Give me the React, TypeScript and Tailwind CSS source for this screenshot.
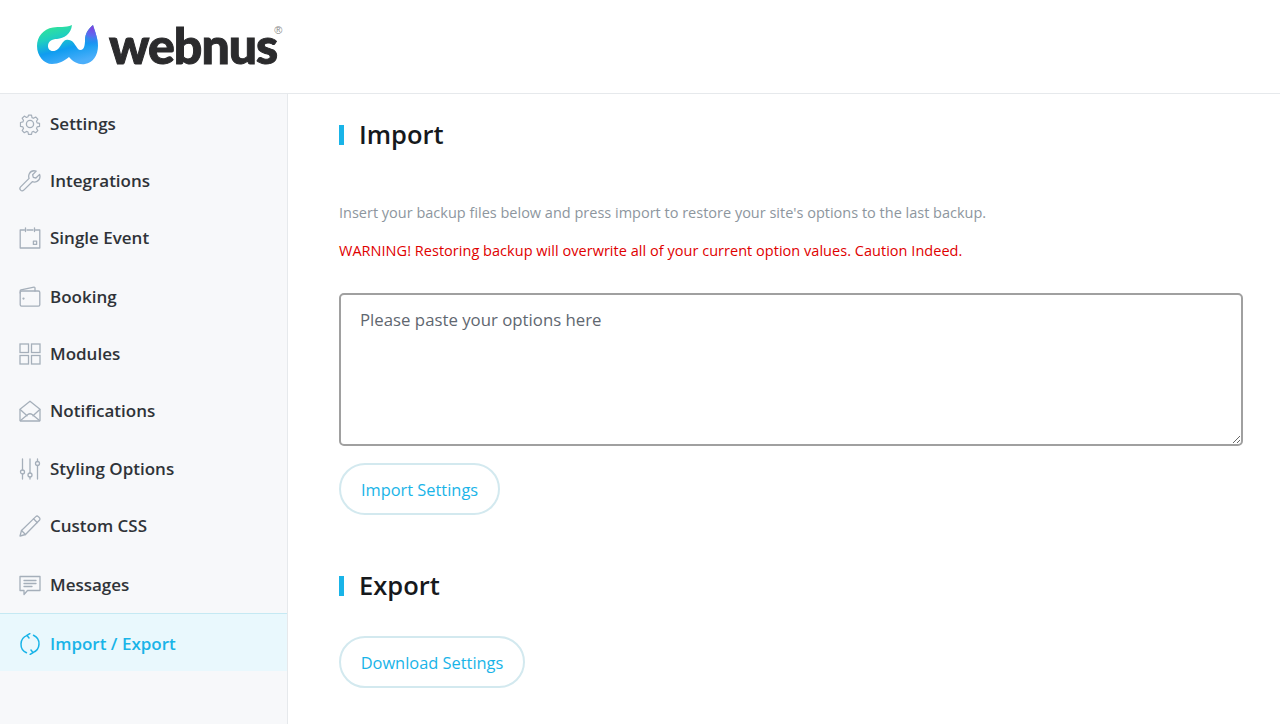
const navItems = [
  { label: "Settings", h: "h-[57.5px]", icon: "gear" },
  { label: "Integrations", h: "h-[57px]", icon: "wrench" },
  { label: "Single Event", h: "h-[57px]", icon: "calendar" },
  { label: "Booking", h: "h-[59.5px] pt-px", icon: "wallet" },
  { label: "Modules", h: "h-[56px]", icon: "grid" },
  { label: "Notifications", h: "h-[57px]", icon: "mail" },
  { label: "Styling Options", h: "h-[59px]", icon: "sliders" },
  { label: "Custom CSS", h: "h-[58px] pb-[2px]", icon: "pencil" },
  { label: "Messages", h: "h-[57px]", icon: "message" },
];

function NavIcon({ name }: { name: string }) {
  const common = {
    width: 22,
    height: 22,
    viewBox: "0 0 22 22",
    fill: "none",
    stroke: "currentColor",
    strokeWidth: 1.3,
    strokeLinejoin: "round" as const,
    strokeLinecap: "round" as const,
  };
  if (name === "gear") {
    return (
      <svg {...common}>
        <circle cx="11" cy="11" r="3.6" />
        <path d="M9.3 1.2h3.4l.5 2.7 1.7.8 2.4-1.5 2.4 2.4-1.5 2.4.7 1.7 2.7.6v3.4l-2.7.5-.7 1.7 1.5 2.4-2.4 2.4-2.4-1.5-1.7.7-.5 2.7H9.3l-.5-2.7-1.7-.7-2.4 1.5-2.4-2.4 1.5-2.4-.7-1.7-2.7-.5V9.3l2.7-.6.7-1.7-1.5-2.4 2.4-2.4 2.4 1.5 1.7-.8z" transform="translate(1.1 1.1) scale(.9)" />
      </svg>
    );
  }
  if (name === "wrench") {
    return (
      <svg {...common}>
        <path d="M20.6 4.4l-3.7 3.6-2.6-.7-.7-2.6 3.6-3.6c-2.6-.8-5.6.2-6.9 2.6-.8 1.6-.8 3.2-.2 4.7L1.6 16.9c-.9 1-.9 2.3 0 3.2.9.9 2.2.9 3.2 0l8.5-8.4c1.5.6 3.2.5 4.7-.3 2.4-1.3 3.4-4.3 2.6-7z" />
      </svg>
    );
  }
  if (name === "calendar") {
    return (
      <svg {...common}>
        <path d="M5.500 3H1.200v18h19.600V3h-4.300M8 3h6" />
        <path d="M6.500 .8v3.700M15.500 .8v3.700" />
        <rect x="14.400" y="14.200" width="3.200" height="3.200" />
      </svg>
    );
  }
  if (name === "wallet") {
    return (
      <svg {...common}>
        <path d="M1.200 7V4.800c0-.5.3-.9.8-1L15 1.200c.6-.1 1 .3 1 .9V5" />
        <rect x="1.200" y="5" width="19.600" height="15.200" rx="1.400" />
        <circle cx="4.500" cy="12.600" r=".5" />
      </svg>
    );
  }
  if (name === "grid") {
    return (
      <svg {...common} strokeLinejoin="miter">
        <rect x="1" y="1" width="8.500" height="8.500" />
        <rect x="12.500" y="1" width="8.500" height="8.500" />
        <rect x="1" y="12.500" width="8.500" height="8.500" />
        <rect x="12.500" y="12.500" width="8.500" height="8.500" />
      </svg>
    );
  }
  if (name === "mail") {
    return (
      <svg {...common}>
        <path d="M1 9.200L11 1.200l10 8v11.300c0 .3-.2.5-.5.5H1.500c-.3 0-.5-.2-.5-.5z" />
        <path d="M1.500 20.600L8.800 14.600c1.300-1 3.100-1 4.400 0l7.300 6" />
        <path d="M1.200 9.600l6.800 6.200M20.800 9.600L14 15.800" />
      </svg>
    );
  }
  if (name === "sliders") {
    return (
      <svg {...common}>
        <path d="M3.500 1v11M3.500 16v5M11 1v14M11 19v2M18.500 1v2.500M18.500 7.500V21" />
        <circle cx="3.500" cy="14" r="2" />
        <circle cx="11" cy="17" r="2" />
        <circle cx="18.500" cy="5.500" r="2" />
      </svg>
    );
  }
  if (name === "pencil") {
    return (
      <svg {...common}>
        <path d="M6.500 19.500L1 21l1.500-5.500L16.800 1.600c.7-.7 1.800-.7 2.500 0l1.100 1.100c.7.7.7 1.800 0 2.500z" />
        <path d="M14.500 3.800l3.700 3.700M2.500 15.500l4 4" />
      </svg>
    );
  }
  if (name === "message") {
    return (
      <svg {...common}>
        <path d="M1 2.500h20v14H8.500L5 20.500v-4H1z" />
        <path d="M5 6.500h12M5 9.500h12M5 12.500h8" />
      </svg>
    );
  }
  return (
    <svg {...common} strokeWidth={1.5}>
      <path d="M7.500 19.800A9.400 9.400 0 0 1 8.200 2.400M14.500 2.200a9.400 9.400 0 0 1-.7 17.400" />
      <path d="M10.800 .6L8 2.400l2 2.600M11.200 21.400l2.800-1.800-2-2.600" />
    </svg>
  );
}

function Logo() {
  const mark =
    "M35 0C28 3 22 1.500 16 2.500C6 4 0 12 0 21C0 31 7 39 15 39C22 39 27 36 32 32C36 37 42 40 48 39C56 38 61 30 61 21C61 13 58 7 56 0C51 4 48 9 48 15C48 19 47.500 25 43.500 25C39 25 38 14 30 14.700C24 15 24 26 16 26C12.500 26 11 23.500 11 21C11 16.500 15 14 20 14C27 13.500 34 9 35 0Z";
  return (
    <div className="flex items-start pl-[37px] pt-[25px]">
      <svg width="62" height="40" viewBox="0 0 62 40">
        <defs>
          <linearGradient id="logoFill" x1="0.1" y1="0" x2="0.5" y2="1">
            <stop offset="0" stopColor="#35e890" />
            <stop offset="0.35" stopColor="#1fcfc0" />
            <stop offset="0.65" stopColor="#0f9cf0" />
            <stop offset="1" stopColor="#4aaefa" />
          </linearGradient>
          <radialGradient id="logoTip" gradientUnits="userSpaceOnUse" cx="56" cy="2" r="20">
            <stop offset="0" stopColor="#8042e0" />
            <stop offset="0.45" stopColor="#5a6cf0" />
            <stop offset="1" stopColor="#1a8cf5" stopOpacity="0" />
          </radialGradient>
        </defs>
        <path fill="url(#logoFill)" d={mark} />
        <path fill="url(#logoTip)" d={mark} />
      </svg>
      <span className="ml-[10px] mt-[-8px] font-['Lato',sans-serif] text-[50px] leading-[56px] font-black tracking-[-1px] text-[#2b2b2d] [-webkit-text-stroke:1px_#2b2b2d]">
        webnus
      </span>
      <span className="ml-[-3px] mt-0 font-['Liberation_Sans',sans-serif] text-[11px] leading-none text-[#8a8a8a]">®</span>
    </div>
  );
}

export default function App() {
  return (
    <div className="h-[724px] w-[1280px] overflow-hidden bg-white font-['Open_Sans',sans-serif]">
      <header className="h-[94px] border-b border-[#e6e9ec]">
        <Logo />
      </header>

      <div className="flex h-[630px]">
        <aside className="w-[288px] shrink-0 border-r border-[#e6e9ec] bg-[#f7f8fa] pt-px">
          {navItems.map((item) => (
            <div key={item.label} className={`flex items-center gap-[9px] pl-[19px] ${item.h}`}>
              <span className="text-[#a5afba]">
                <NavIcon name={item.icon} />
              </span>
              <span className="text-[17px] font-[560] text-[#2f3338]">{item.label}</span>
            </div>
          ))}
          <div className="flex h-[58px] items-center gap-[9px] border-t border-[#c5e9f3] bg-[#e9f8fd] pl-[19px] pt-[2px] text-[#19b4e8]">
            <NavIcon name="refresh" />
            <span className="text-[17px] font-[560]">Import / Export</span>
          </div>
        </aside>

        <main className="flex-1 pl-[51px] pr-[37px]">
          <div className="mt-[31px] flex items-center gap-[15px]">
            <span className="h-5 w-[5px] bg-[#19b4e8]" />
            <h2 className="-mt-[2px] text-[25.500px] leading-[20px] font-semibold text-[#16191c]">Import</h2>
          </div>

          <p className="mt-[58px] text-[14.500px] leading-5 text-[#8d969e]">
            Insert your backup files below and press import to restore your site's options to the last backup.
          </p>
          <p className="mt-[18px] text-[14.500px] leading-5 tracking-[0.03px] text-[#e00000]">
            WARNING! Restoring backup will overwrite all of your current option values. Caution Indeed.
          </p>

          <textarea
            placeholder="Please paste your options here"
            className="mt-[32px] block h-[153px] w-full rounded-[5px] border-2 border-[#a0a0a0] px-[19px] py-[13px] text-[16.800px] leading-6 outline-none placeholder:text-[#5f6770]"
          />

          <button className="mt-[17px] block h-[52px] w-[161px] rounded-full border-2 border-[#d3e9ef] bg-white pt-[2px] text-[16.400px] text-[#19b4e8]">
            Import Settings
          </button>

          <div className="mt-[61px] flex items-center gap-[15px]">
            <span className="h-5 w-[5px] bg-[#19b4e8]" />
            <h2 className="-mt-[2px] text-[25.500px] leading-[20px] font-semibold text-[#16191c]">Export</h2>
          </div>

          <button className="mt-[40px] block h-[52px] w-[186px] rounded-full border-2 border-[#d3e9ef] bg-white pt-[2px] text-[16.400px] text-[#19b4e8]">
            Download Settings
          </button>
        </main>
      </div>
    </div>
  );
}
